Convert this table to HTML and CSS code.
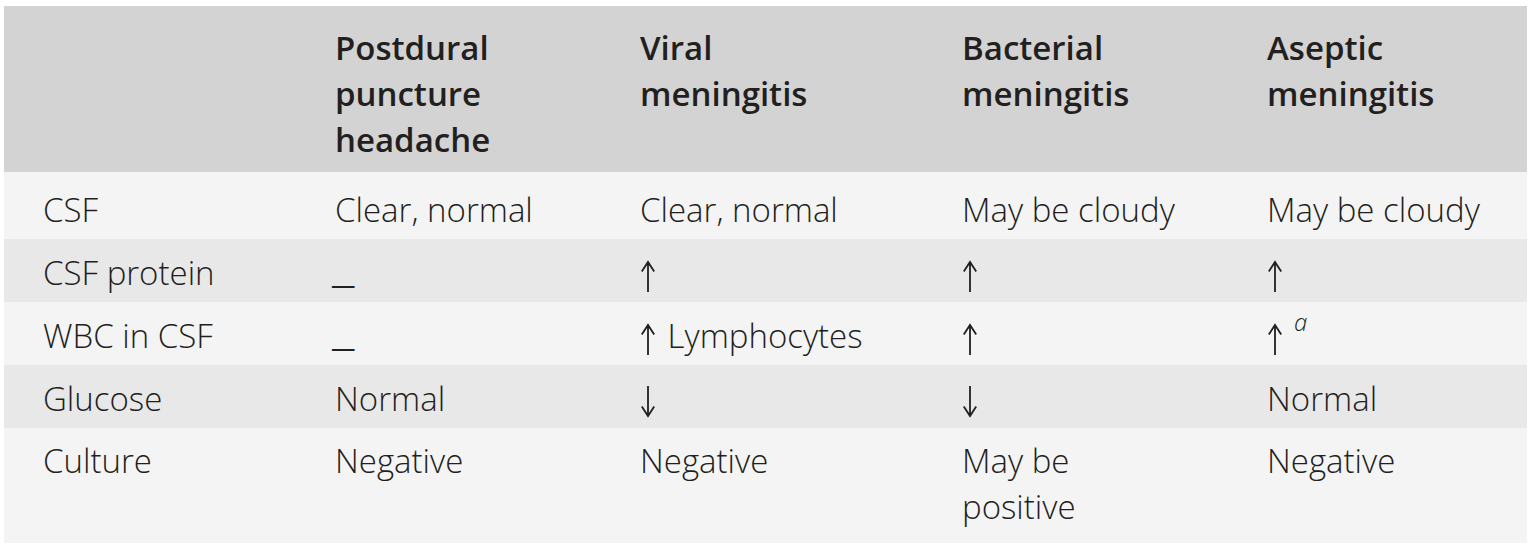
FILE: index.html
```html
<!DOCTYPE html>
<html lang="en">
<head>
<meta charset="utf-8">
<title>CSF findings</title>
<link rel="stylesheet" href="styles.css">
</head>
<body>
<table class="csf-table">
  <colgroup>
    <col class="c1"><col class="c2"><col class="c3"><col class="c4"><col class="c5">
  </colgroup>
  <thead>
    <tr class="head-row">
      <th></th>
      <th>Postdural<br>puncture<br>headache</th>
      <th>Viral<br>meningitis</th>
      <th>Bacterial<br>meningitis</th>
      <th>Aseptic<br>meningitis</th>
    </tr>
  </thead>
  <tbody>
    <tr class="row light first">
      <td>CSF</td>
      <td>Clear, normal</td>
      <td>Clear, normal</td>
      <td>May be cloudy</td>
      <td>May be cloudy</td>
    </tr>
    <tr class="row dark">
      <td>CSF protein</td>
      <td><span class="dash">_</span></td>
      <td><svg class="arrow" viewBox="0 0 16 32" role="img" aria-label="↑"><path d="M8 2V32M1.8 11.5L8 2L14.2 11.5"/></svg></td>
      <td><svg class="arrow" viewBox="0 0 16 32" role="img" aria-label="↑"><path d="M8 2V32M1.8 11.5L8 2L14.2 11.5"/></svg></td>
      <td><svg class="arrow" viewBox="0 0 16 32" role="img" aria-label="↑"><path d="M8 2V32M1.8 11.5L8 2L14.2 11.5"/></svg></td>
    </tr>
    <tr class="row light">
      <td>WBC in CSF</td>
      <td><span class="dash">_</span></td>
      <td><svg class="arrow gap" viewBox="0 0 16 32" role="img" aria-label="↑"><path d="M8 2V32M1.8 11.5L8 2L14.2 11.5"/></svg> Lymphocytes</td>
      <td><svg class="arrow" viewBox="0 0 16 32" role="img" aria-label="↑"><path d="M8 2V32M1.8 11.5L8 2L14.2 11.5"/></svg></td>
      <td><svg class="arrow" viewBox="0 0 16 32" role="img" aria-label="↑"><path d="M8 2V32M1.8 11.5L8 2L14.2 11.5"/></svg><sup class="note">a</sup></td>
    </tr>
    <tr class="row dark">
      <td>Glucose</td>
      <td>Normal</td>
      <td><svg class="arrow" viewBox="0 0 16 32" role="img" aria-label="↓"><path d="M8 0V30M1.8 20.5L8 30L14.2 20.5"/></svg></td>
      <td><svg class="arrow" viewBox="0 0 16 32" role="img" aria-label="↓"><path d="M8 0V30M1.8 20.5L8 30L14.2 20.5"/></svg></td>
      <td>Normal</td>
    </tr>
    <tr class="row light last">
      <td>Culture</td>
      <td>Negative</td>
      <td>Negative</td>
      <td>May be<br>positive</td>
      <td>Negative</td>
    </tr>
  </tbody>
</table>
</body>
</html>
```
FILE: styles.css
```css
html, body {
  margin: 0;
  padding: 0;
  background: #ffffff;
}

body {
  font-family: "Open Sans", "Noto Sans", "Liberation Sans", sans-serif;
  color: #231f20;
}

.csf-table {
  margin: 6px 0 0 4px;
  width: 1523px;
  border-collapse: collapse;
  border-spacing: 0;
  table-layout: fixed;
}

.c1 { width: 292px; }
.c2 { width: 305px; }
.c3 { width: 322px; }
.c4 { width: 305px; }
.c5 { width: 299px; }

.csf-table th,
.csf-table td {
  text-align: left;
  vertical-align: top;
  padding: 11px 8px 6px 39px;
  font-size: 33px;
  line-height: 46px;
  white-space: nowrap;
}

.head-row {
  background: #d3d3d3;
}

.head-row th {
  font-weight: 600;
  padding-top: 19px;
  padding-bottom: 9px;
}

.row td {
  font-weight: 300;
}

.light { background: #f4f4f4; }
.dark  { background: #e8e8e8; }

.first td { padding-top: 15px; }
.last td { padding-top: 10px; padding-bottom: 13px; }

.arrow {
  width: 16px;
  height: 32px;
  vertical-align: -7px;
  fill: none;
  stroke: #231f20;
  stroke-width: 1.8;
}

.arrow.gap {
  margin-right: 3px;
}

.arrow path {
  stroke-linejoin: miter;
}

.dash {
  display: inline-block;
  margin-left: -3px;
  font-weight: 400;
  transform: scaleX(1.55) translateY(-2px);
  transform-origin: left center;
}

.note {
  font-size: 24px;
  font-style: italic;
  font-weight: 300;
  line-height: 0;
  vertical-align: 17px;
  margin-left: 11px;
}
```
